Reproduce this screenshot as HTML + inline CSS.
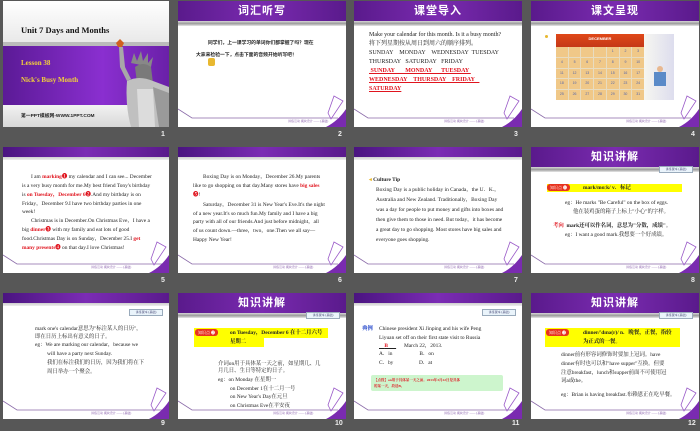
<!DOCTYPE html>
<html><head><meta charset="utf-8"><style>
*{margin:0;padding:0;box-sizing:border-box}
body{width:700px;height:431px;background:#575757;position:relative;overflow:hidden;font-family:"Liberation Serif","Noto Serif CJK SC","Noto Sans CJK SC",serif}
.s{position:absolute;width:168px;height:126px;background:#fff;overflow:hidden}
.hd{position:absolute;left:0;top:0;width:100%;height:20px;background:linear-gradient(90deg,#5a1a8c,#7a2bb0 50%,#5a1a8c);}
.hd b{position:absolute;width:100%;text-align:center;top:3px;color:#fff;font:bold 11px "Noto Sans CJK SC",sans-serif;letter-spacing:1px;line-height:13px}
.gs{position:absolute;left:0;top:20px;width:100%;height:5px;background:linear-gradient(#d8d8d8,#9a9a9a,#e8e8e8)}
.th{position:absolute;left:0;top:0;width:100%;height:10px;background:linear-gradient(90deg,#4a1480,#7b2cb4,#5a1a8c)}
.tg{position:absolute;left:0;top:10px;width:100%;height:3px;background:linear-gradient(#ccc,#eee)}
.t{position:absolute;font-size:5.4px;color:#222;white-space:nowrap;line-height:6px}
.r{color:#e0141e;font-weight:bold}
.n{position:absolute;color:#eee;font:bold 7px "Liberation Sans",sans-serif}
.box{position:absolute;left:128px;top:19px;width:34px;height:7px;background:#eaf4fb;border:1px solid #9ab;font-size:3px;text-align:center;line-height:5px;color:#336}
.yb{position:absolute;background:#ffff00}
.kp{position:absolute;background:#e8321e;color:#fff;font-size:4px;border-radius:3px;padding:0 3px;line-height:7px}
.ft{position:absolute;left:0;top:0}
.cal{position:absolute;left:25px;top:46px;width:88px;height:53px;display:grid;grid-template-columns:repeat(7,1fr);gap:1px;background:#e8dcc0}
.cal i{background:#f0c888;font:normal 3.5px sans-serif;color:#56a;text-align:center;line-height:9px;font-style:normal}
</style></head><body>

<div class="s" style="left:3px;top:1px;width:166px">
<div style="position:absolute;left:0;top:0;width:100%;height:41px;background:linear-gradient(#fff,#e9e9e9)"></div>
<div class="t" style="left:18px;top:24px;font-size:8.5px;line-height:10px;font-weight:bold;color:#111">Unit 7 Days and Months</div>
<div style="position:absolute;left:0;top:41px;width:100%;height:4px;background:#bbb"></div>
<div style="position:absolute;left:0;top:45px;width:166px;height:59px;background:linear-gradient(90deg,#5b1a96,#8a2fd0 60%,#6a20a8)"></div>
<div class="t" style="left:18px;top:58px;font-size:7px;line-height:8px;font-weight:bold;color:#f4d23a">Lesson 38</div>
<div class="t" style="left:18px;top:75px;font-size:7px;line-height:8px;font-weight:bold;color:#f4d23a">Nick's Busy Month</div>
<div style="position:absolute;left:0;top:104px;width:100%;height:22px;background:linear-gradient(#f2f2f2,#d8d8d8)"></div>
<div class="t" style="left:18px;top:111px;font:bold 4.8px 'Liberation Sans','Noto Sans CJK SC',sans-serif;color:#222">第一PPT模板网-WWW.1PPT.COM</div>
<svg class="ft" width="166" height="126"><path d="M113 42 L117 38 L121 42 L119 46 L115 46Z" fill="#d06020"/><path d="M116 46 L120 46 L122 66 L128 78 L124 80 L117 66Z" fill="#a8a8a8"/><path d="M128 62 L131 52 L134 60 L138 50 L140 60 L145 52 L145 62 L150 56 L148 66Z" fill="#888"/><path d="M132 66 Q140 60 148 66 L150 82 L134 82Z" fill="#7a7a7a"/><path d="M124 80 Q136 74 150 80 L166 86 L166 126 L128 126 Q122 104 124 80Z" fill="#c0c0c0"/><path d="M134 88 L150 88 L152 126 L136 126Z" fill="#dcdcdc"/><path d="M150 86 L166 92 L166 126 L156 126Z" fill="#9a9a9a"/></svg>
</div>

<div class="s" style="left:178px;top:1px">
<div class="hd"><b>词汇听写</b></div><div class="gs"></div>
<div class="t" style="left:30px;top:38px;font:bold 4.8px 'Noto Sans CJK SC',sans-serif">同学们，上一课学习的单词你们都掌握了吗？现在</div>
<div class="t" style="left:18px;top:50px;font:bold 4.8px 'Noto Sans CJK SC',sans-serif">大家来检验一下，点击下面的音频开始听写吧！</div>
<div style="position:absolute;left:30px;top:57px;width:7px;height:8px;background:#e8b830;border-radius:2px"></div>
<svg class="ft" width="168" height="126"><path d="M0 108 L14 117 L160 117" stroke="#8a6aa8" fill="none" stroke-width="0.8"/><path d="M168 108 L168 126 L148 126 Q160 120 168 108Z" fill="#7a2bb0"/><path d="M156 95 L165 100 L153 118 L150 112Z" fill="none" stroke="#9a5ac8" stroke-width="0.8"/><text x="110" y="121" font-size="3" fill="#7a4aa0">讲练互动 模块设计 —— (基础)</text></svg>
</div>

<div class="s" style="left:354px;top:1px">
<div class="hd"><b>课堂导入</b></div><div class="gs"></div>
<div class="t" style="left:15px;top:31px;font-size:6px">Make your calendar for this month. Is it a busy month?</div>
<div class="t" style="left:15px;top:40px;font-size:6px">将下列星期按从周日到周六的顺序排列。</div>
<div class="t" style="left:15px;top:49px;font-size:6px">SUNDAY &nbsp;&nbsp; MONDAY &nbsp;&nbsp; WEDNESDAY &nbsp;TUESDAY</div>
<div class="t" style="left:15px;top:58px;font-size:6px">THURSDAY &nbsp; SATURDAY &nbsp; FRIDAY</div>
<div class="t r" style="left:15px;top:67px;font-size:6px;text-decoration:underline">&nbsp;SUNDAY &nbsp;&nbsp;&nbsp;&nbsp; &nbsp;MONDAY &nbsp;&nbsp;&nbsp; &nbsp;TUESDAY&nbsp;</div>
<div class="t r" style="left:15px;top:76px;font-size:6px;text-decoration:underline">WEDNESDAY &nbsp; &nbsp;THURSDAY &nbsp;&nbsp; FRIDAY&nbsp;&nbsp;&nbsp;</div>
<div class="t r" style="left:15px;top:85px;font-size:6px;text-decoration:underline">SATURDAY</div>
<svg class="ft" width="168" height="126"><path d="M0 108 L14 117 L160 117" stroke="#8a6aa8" fill="none" stroke-width="0.8"/><path d="M168 108 L168 126 L148 126 Q160 120 168 108Z" fill="#7a2bb0"/><path d="M156 95 L165 100 L153 118 L150 112Z" fill="none" stroke="#9a5ac8" stroke-width="0.8"/><text x="90" y="121" font-size="3" fill="#7a4aa0">讲练互动 模块设计 —— (基础)</text></svg>
</div>

<div class="s" style="left:531px;top:1px">
<div class="hd"><b>课文呈现</b></div><div class="gs"></div>
<div style="position:absolute;left:14px;top:34px;width:3px;height:3px;background:#e8b830;border-radius:2px"></div>
<div style="position:absolute;left:25px;top:33px;width:118px;height:66px;background:#f3e8cf"></div>
<div style="position:absolute;left:25px;top:33px;width:88px;height:13px;background:linear-gradient(#e04818,#c43818);color:#fff;font:bold 4px sans-serif;text-align:center;line-height:10px">DECEMBER</div>
<div class="cal"><i></i><i></i><i></i><i></i><i>1</i><i>2</i><i>3</i><i>4</i><i>5</i><i>6</i><i>7</i><i>8</i><i>9</i><i>10</i><i>11</i><i>12</i><i>13</i><i>14</i><i>15</i><i>16</i><i>17</i><i>18</i><i>19</i><i>20</i><i>21</i><i>22</i><i>23</i><i>24</i><i>25</i><i>26</i><i>27</i><i>28</i><i>29</i><i>30</i><i>31</i></div>
<div style="position:absolute;left:113px;top:33px;width:30px;height:66px;background:linear-gradient(90deg,#f6f6f0,#dde)"></div>
<div style="position:absolute;left:126px;top:65px;width:6px;height:6px;background:#e8b890;border-radius:50%"></div>
<div style="position:absolute;left:123px;top:71px;width:12px;height:14px;background:#5a8ac8"></div>
<svg class="ft" width="168" height="126"><path d="M0 108 L14 117 L160 117" stroke="#8a6aa8" fill="none" stroke-width="0.8"/><path d="M168 108 L168 126 L148 126 Q160 120 168 108Z" fill="#7a2bb0"/><path d="M156 95 L165 100 L153 118 L150 112Z" fill="none" stroke="#9a5ac8" stroke-width="0.8"/><text x="95" y="121" font-size="3" fill="#7a4aa0">讲练互动 模块设计 —— (基础)</text></svg>
</div>

<div class="s" style="left:3px;top:147px;width:166px">
<div class="th"></div><div class="tg"></div>
<div class="t" style="left:28px;top:27px">I am <span class="r">marking❶</span> my calendar and I can see... December</div>
<div class="t" style="left:19px;top:36px">is a very busy month for me.My best friend Tony's birthday</div>
<div class="t" style="left:19px;top:45px">is <span class="r">on Tuesday，December 6❷</span>.And my birthday is on</div>
<div class="t" style="left:19px;top:54px">Friday，December 9.I have two birthday parties in one</div>
<div class="t" style="left:19px;top:62px">week!</div>
<div class="t" style="left:28px;top:71px">Christmas is in December.On Christmas Eve，I have a</div>
<div class="t" style="left:19px;top:80px">big <span class="r">dinner❸</span> with my family and eat lots of good</div>
<div class="t" style="left:19px;top:89px">food.Christmas Day is on Sunday，December 25.I <span class="r">get</span></div>
<div class="t" style="left:19px;top:98px"><span class="r">many presents❹</span> on that day.I love Christmas!</div>
<svg class="ft" width="166" height="126"><path d="M0 108 L14 117 L160 117" stroke="#8a6aa8" fill="none" stroke-width="0.8"/><path d="M166 108 L166 126 L146 126 Q158 120 166 108Z" fill="#7a2bb0"/><path d="M154 95 L163 100 L151 118 L148 112Z" fill="none" stroke="#9a5ac8" stroke-width="0.8"/><text x="88" y="121" font-size="3" fill="#7a4aa0">讲练互动 模块设计 —— (基础)</text></svg>
</div>

<div class="s" style="left:178px;top:147px">
<div class="th"></div><div class="tg"></div>
<div class="t" style="left:25px;top:27px">Boxing Day is on Monday，December 26.My parents</div>
<div class="t" style="left:15px;top:36px">like to go shopping on that day.Many stores have <span class="r">big sales</span></div>
<div class="t" style="left:15px;top:45px"><span class="r">❺</span>!</div>
<div class="t" style="left:25px;top:55px">Saturday，December 31 is New Year's Eve.It's the night</div>
<div class="t" style="left:15px;top:64px">of a new year.It's so much fun.My family and I have a big</div>
<div class="t" style="left:15px;top:72px">party with all of our friends.And just before midnight，all</div>
<div class="t" style="left:15px;top:81px">of us count down.—three，two，one.Then we all say—</div>
<div class="t" style="left:15px;top:90px">Happy New Year!</div>
<svg class="ft" width="168" height="126"><path d="M0 108 L14 117 L160 117" stroke="#8a6aa8" fill="none" stroke-width="0.8"/><path d="M168 108 L168 126 L148 126 Q160 120 168 108Z" fill="#7a2bb0"/><path d="M156 95 L165 100 L153 118 L150 112Z" fill="none" stroke="#9a5ac8" stroke-width="0.8"/><text x="95" y="121" font-size="3" fill="#7a4aa0">讲练互动 模块设计 —— (基础)</text></svg>
</div>

<div class="s" style="left:354px;top:147px">
<div class="th"></div><div class="tg"></div>
<div class="t" style="left:15px;top:30px;font-weight:bold"><span style="color:#e8b830">◂</span> Culture Tip</div>
<div class="t" style="left:22px;top:40px">Boxing Day is a public holiday in Canada，the U．K.，</div>
<div class="t" style="left:22px;top:50px">Australia and New Zealand. Traditionally，Boxing Day</div>
<div class="t" style="left:22px;top:60px">was a day for people to put money and gifts into boxes and</div>
<div class="t" style="left:22px;top:70px">then give them to those in need. But today，it has become</div>
<div class="t" style="left:22px;top:80px">a great day to go shopping. Most stores have big sales and</div>
<div class="t" style="left:22px;top:90px">everyone goes shopping.</div>
<svg class="ft" width="168" height="126"><path d="M0 108 L14 117 L160 117" stroke="#8a6aa8" fill="none" stroke-width="0.8"/><path d="M168 108 L168 126 L148 126 Q160 120 168 108Z" fill="#7a2bb0"/><path d="M156 95 L165 100 L153 118 L150 112Z" fill="none" stroke="#9a5ac8" stroke-width="0.8"/><text x="90" y="121" font-size="3" fill="#7a4aa0">讲练互动 模块设计 —— (基础)</text></svg>
</div>

<div class="s" style="left:531px;top:147px">
<div class="hd"><b>知识讲解</b></div><div class="gs"></div>
<div class="box">讲练课本 (基础)</div>
<div class="yb" style="left:16px;top:37px;width:135px;height:8px"></div>
<div class="kp" style="left:16px;top:37px">知识点 ❶</div>
<div class="t" style="left:52px;top:38px;font-weight:bold">mark/mɑːk/ v．标记</div>
<div class="t" style="left:34px;top:53px">eg：He marks "Be Careful" on the box of eggs.</div>
<div class="t" style="left:42px;top:62px">他在装鸡蛋的箱子上标上"小心"的字样。</div>
<div class="t" style="left:22px;top:76px;font-weight:bold"><span class="r">考向</span> &nbsp;mark还可以作名词，意思为"分数，成绩"。</div>
<div class="t" style="left:34px;top:85px">eg：I want a good mark.我想要一个好成绩。</div>
<svg class="ft" width="168" height="126"><path d="M0 108 L14 117 L160 117" stroke="#8a6aa8" fill="none" stroke-width="0.8"/><path d="M168 108 L168 126 L148 126 Q160 120 168 108Z" fill="#7a2bb0"/><path d="M156 95 L165 100 L153 118 L150 112Z" fill="none" stroke="#9a5ac8" stroke-width="0.8"/><text x="95" y="121" font-size="3" fill="#7a4aa0">讲练互动 模块设计 —— (基础)</text></svg>
</div>

<div class="s" style="left:3px;top:293px;width:166px">
<div class="th"></div><div class="tg"></div>
<div class="box" style="top:16px;left:126px">讲练课本 (基础)</div>
<div class="t" style="left:32px;top:33px">mark one's calendar意思为"标注某人的日历"，</div>
<div class="t" style="left:32px;top:41px">即在日历上标出有意义的日子。</div>
<div class="t" style="left:32px;top:49px">eg：We are marking our calendar，because we</div>
<div class="t" style="left:44px;top:58px">will have a party next Sunday.</div>
<div class="t" style="left:44px;top:67px">我们在标注我们的日历，因为我们将在下</div>
<div class="t" style="left:44px;top:76px">周日举办一个聚会。</div>
<svg class="ft" width="166" height="126"><path d="M0 108 L14 117 L160 117" stroke="#8a6aa8" fill="none" stroke-width="0.8"/><path d="M166 108 L166 126 L146 126 Q158 120 166 108Z" fill="#7a2bb0"/><path d="M154 95 L163 100 L151 118 L148 112Z" fill="none" stroke="#9a5ac8" stroke-width="0.8"/><text x="88" y="121" font-size="3" fill="#7a4aa0">讲练互动 模块设计 —— (基础)</text></svg>
</div>

<div class="s" style="left:178px;top:293px">
<div class="hd"><b>知识讲解</b></div><div class="gs"></div>
<div class="box">讲练课本 (基础)</div>
<div class="yb" style="left:16px;top:35px;width:134px;height:10px"></div>
<div class="yb" style="left:16px;top:45px;width:70px;height:9px"></div>
<div class="kp" style="left:17px;top:36px">知识点 ❷</div>
<div class="t" style="left:52px;top:37px;font-weight:bold">on Tuesday，December 6 在十二月六号</div>
<div class="t" style="left:52px;top:46px;font-weight:bold">星期二</div>
<div class="t" style="left:40px;top:68px">介词on用于具体某一天之前，如星期几、几</div>
<div class="t" style="left:40px;top:75px">月几日、生日等特定的日子。</div>
<div class="t" style="left:40px;top:84px">eg：on Monday 在星期一</div>
<div class="t" style="left:52px;top:93px">on December 1在十二月一号</div>
<div class="t" style="left:52px;top:101px">on New Year's Day在元旦</div>
<div class="t" style="left:52px;top:110px">on Christmas Eve在平安夜</div>
<svg class="ft" width="168" height="126"><path d="M0 108 L14 117 L160 117" stroke="#8a6aa8" fill="none" stroke-width="0.8"/><path d="M168 108 L168 126 L148 126 Q160 120 168 108Z" fill="#7a2bb0"/><path d="M156 95 L165 100 L153 118 L150 112Z" fill="none" stroke="#9a5ac8" stroke-width="0.8"/><text x="95" y="121" font-size="3" fill="#7a4aa0">讲练互动 模块设计 —— (基础)</text></svg>
</div>

<div class="s" style="left:354px;top:293px">
<div class="th"></div><div class="tg"></div>
<div class="box" style="top:16px">讲练课本 (基础)</div>
<div class="t" style="left:8px;top:33px;color:#1a3ec8;font-weight:bold">典例</div>
<div class="t" style="left:25px;top:33px">Chinese president Xi Jinping and his wife Peng</div>
<div class="t" style="left:25px;top:42px">Liyuan set off on their first state visit to Russia</div>
<div class="t" style="left:25px;top:50px;text-decoration:underline">&nbsp;&nbsp;&nbsp;&nbsp;<span class="r">B</span>&nbsp;&nbsp;&nbsp;&nbsp;&nbsp;&nbsp;</div>
<div class="t" style="left:50px;top:50px">March 22，2013.</div>
<div class="t" style="left:25px;top:58px">A．in &nbsp;&nbsp;&nbsp;&nbsp;&nbsp;&nbsp;&nbsp;&nbsp;&nbsp;&nbsp;&nbsp;&nbsp;&nbsp;&nbsp;&nbsp;&nbsp;&nbsp;&nbsp; B．on</div>
<div class="t" style="left:25px;top:67px">C．by &nbsp;&nbsp;&nbsp;&nbsp;&nbsp;&nbsp;&nbsp;&nbsp;&nbsp;&nbsp;&nbsp;&nbsp;&nbsp;&nbsp;&nbsp;&nbsp;&nbsp; D．at</div>
<div style="position:absolute;left:17px;top:82px;width:132px;height:16px;background:#cdf5cd;border-radius:2px"></div>
<div class="t r" style="left:20px;top:84px;font-size:3.5px;line-height:6px">【点拨】on用于具体某一天之前。2013年3月22日是具体</div>
<div class="t r" style="left:20px;top:90px;font-size:3.5px">的某一天，故选B。</div>
<svg class="ft" width="168" height="126"><path d="M0 108 L14 117 L160 117" stroke="#8a6aa8" fill="none" stroke-width="0.8"/><path d="M168 108 L168 126 L148 126 Q160 120 168 108Z" fill="#7a2bb0"/><path d="M156 95 L165 100 L153 118 L150 112Z" fill="none" stroke="#9a5ac8" stroke-width="0.8"/><text x="90" y="121" font-size="3" fill="#7a4aa0">讲练互动 模块设计 —— (基础)</text></svg>
</div>

<div class="s" style="left:531px;top:293px">
<div class="hd"><b>知识讲解</b></div><div class="gs"></div>
<div class="box">讲练课本 (基础)</div>
<div class="yb" style="left:14px;top:35px;width:135px;height:19px"></div>
<div class="kp" style="left:15px;top:36px">知识点 ❸</div>
<div class="t" style="left:52px;top:37px;font-weight:bold">dinner/'dɪnə(r)/ n．晚餐，正餐，指较</div>
<div class="t" style="left:52px;top:46px;font-weight:bold">为正式的一餐。</div>
<div class="t" style="left:30px;top:59px">dinner前有形容词修饰时要加上冠词。have</div>
<div class="t" style="left:30px;top:68px">dinner有时也可以和"have supper"互换。但要</div>
<div class="t" style="left:30px;top:77px">注意breakfast，lunch和supper前面不可使用冠</div>
<div class="t" style="left:30px;top:85px">词a或the。</div>
<div class="t" style="left:30px;top:99px">eg：Brian is having breakfast.布赖恩正在吃早餐。</div>
<svg class="ft" width="168" height="126"><path d="M0 108 L14 117 L160 117" stroke="#8a6aa8" fill="none" stroke-width="0.8"/><path d="M168 108 L168 126 L148 126 Q160 120 168 108Z" fill="#7a2bb0"/><path d="M156 95 L165 100 L153 118 L150 112Z" fill="none" stroke="#9a5ac8" stroke-width="0.8"/><text x="95" y="121" font-size="3" fill="#7a4aa0">讲练互动 模块设计 —— (基础)</text></svg>
</div>

<div class="n" style="left:161px;top:131px">1</div>
<div class="n" style="left:338px;top:131px">2</div>
<div class="n" style="left:514px;top:131px">3</div>
<div class="n" style="left:691px;top:131px">4</div>
<div class="n" style="left:161px;top:277px">5</div>
<div class="n" style="left:338px;top:277px">6</div>
<div class="n" style="left:514px;top:277px">7</div>
<div class="n" style="left:691px;top:277px">8</div>
<div class="n" style="left:161px;top:420px">9</div>
<div class="n" style="left:335px;top:420px">10</div>
<div class="n" style="left:512px;top:420px">11</div>
<div class="n" style="left:688px;top:420px">12</div>
</body></html>
